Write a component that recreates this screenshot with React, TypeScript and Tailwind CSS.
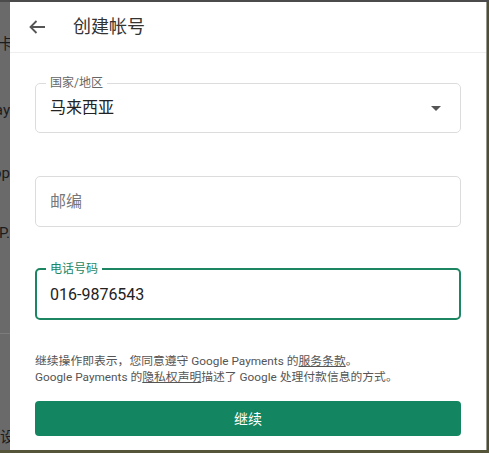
import React from "react";

const font = "font-['Roboto','Noto_Sans_CJK_SC',sans-serif]";

function BackdropStrip() {
  // the page underneath the dialog, dimmed; only its right edge shows
  return (
    <div className="w-[10px] shrink-0 overflow-hidden flex flex-col items-end bg-[#6a6a6a] text-[#1c1c1c] text-[15px]">
      <div className="mt-[32px] h-[20px] leading-[20px] whitespace-nowrap mr-[-3px]">银行卡</div>
      <div className="mt-[46px] h-[20px] leading-[20px] whitespace-nowrap">Google Pay</div>
      <div className="mt-[43px] h-[20px] leading-[20px] whitespace-nowrap">Shop</div>
      <div className="mt-[40px] h-[20px] leading-[20px] whitespace-nowrap">Pay P.</div>
      <div className="mt-[90px] h-px w-full bg-[#7c7c7c] shrink-0" />
      <div className="mt-[93px] h-[20px] leading-[20px] whitespace-nowrap mr-[-5px]">设</div>
    </div>
  );
}

export default function App() {
  return (
    <div className={`w-[489px] h-[453px] flex flex-col overflow-hidden bg-[#6a6a6a] ${font}`}>
      <div className="h-[2px] shrink-0 bg-[#4b4b4b]" />
      <div className="flex flex-1 min-h-0">
        <BackdropStrip />

        <div className="flex-1 flex flex-col bg-white">
          {/* header */}
          <div className="h-[51px] shrink-0 flex items-center border-b border-[#eeeeee]">
            <svg width="16" height="14" viewBox="0 0 16 14" className="ml-[19px]" fill="none" stroke="#555" strokeWidth="1.8">
              <path d="M16 7H1.5M7.5 1L1.5 7l6 6" />
            </svg>
            <span className="ml-[28px] text-[18px] text-[#333] leading-6">创建帐号</span>
          </div>

          <div className="px-[25px] flex flex-col">
            {/* country */}
            <fieldset className="mt-[22px] border border-[#dcdcdc] rounded-[5px]">
              <legend className="ml-[10px] px-[4px] text-[12px] leading-4 text-[#666]">国家/地区</legend>
              <div className="h-[41px] pt-[5px] pl-[14px] pr-[19px] flex items-start justify-between">
                <span className="text-[16px] leading-6 text-[#222]">马来西亚</span>
                <svg width="10" height="5" viewBox="0 0 10 5" className="mt-[10px]">
                  <path d="M0 0h10L5 5z" fill="#555" />
                </svg>
              </div>
            </fieldset>

            {/* postcode */}
            <div className="mt-[43px] h-[51px] border border-[#dcdcdc] rounded-[5px] flex items-center pl-[14px]">
              <span className="text-[16px] leading-6 text-[#777]">邮编</span>
            </div>

            {/* phone */}
            <fieldset className="mt-[34px] border-2 border-[#1c8663] rounded-[5px]">
              <legend className="ml-[9px] px-[4px] text-[12px] leading-4 text-[#1c8663]">电话号码</legend>
              <div className="h-[41px] pt-[6px] pl-[13px]">
                <span className="text-[16px] leading-6 text-[#222]">016-9876543</span>
              </div>
            </fieldset>

            {/* legal */}
            <div className="mt-[33px] text-[11.8px] leading-4 text-[#555]">
              <div>
                继续操作即表示，您同意遵守 Google Payments 的<span className="underline">服务条款</span>。
              </div>
              <div>
                Google Payments 的<span className="underline">隐私权声明</span>描述了 Google 处理付款信息的方式。
              </div>
            </div>

            <button className="mt-[16px] h-[35px] rounded-[4px] bg-[#138560] text-white text-[14px] leading-5">
              继续
            </button>
          </div>
        </div>

        <div className="w-[3px] shrink-0 bg-[#9a9a90] border-r-2 border-[#4e4e36]" />
      </div>
      <div className="h-[3px] shrink-0 bg-[#55553a]" />
    </div>
  );
}
